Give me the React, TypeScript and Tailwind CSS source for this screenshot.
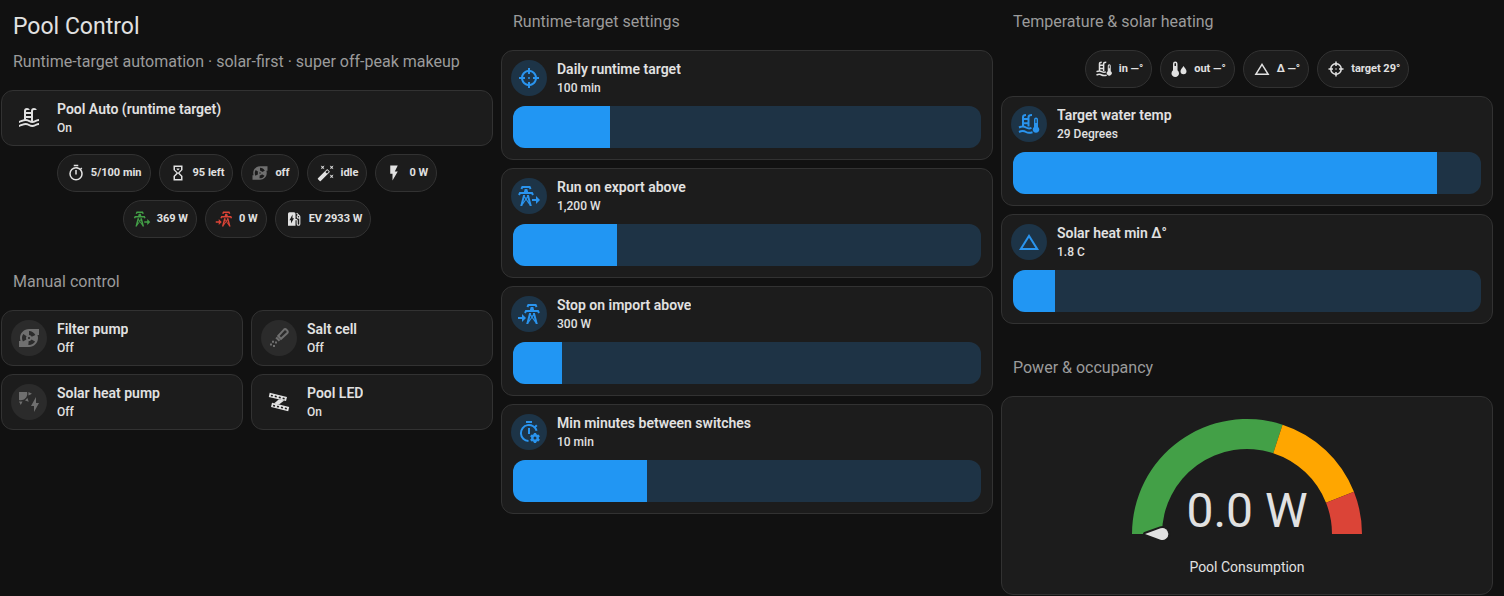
import { ReactNode, useState } from 'react'
import clsx from 'clsx'

type IconProps = { className?: string }

const POOL =
    'M2,15C3.67,14.25 5.33,13.5 7,13.25V5A3,3 0 0,1 10,2C11.31,2 12.42,2.83 12.83,4H10A1,1 0 0,0 9,5V6H14V5A3,3 0 0,1 17,2C18.31,2 19.42,2.83 19.83,4H17A1,1 0 0,0 16,5V14.94C18,14.62 20,13 22,13V15C19.78,15 17.56,17 15.33,17C13.11,17 10.89,15 8.67,15C6.44,15 4.22,16 2,17V15M14,8H9V10H14V8M14,12H9V13C10.67,13.16 12.33,14.31 14,14.79V12M2,19C4.22,18 6.44,17 8.67,17C10.89,17 13.11,19 15.33,19C17.56,19 19.78,17 22,17V19C19.78,19 17.56,21 15.33,21C13.11,21 10.89,19 8.67,19C6.44,19 4.22,20 2,21V19Z'
const TIMER =
    'M12,20A7,7 0 0,1 5,13A7,7 0 0,1 12,6A7,7 0 0,1 19,13A7,7 0 0,1 12,20M19.03,7.39L20.45,5.97C20,5.46 19.55,5 19.04,4.56L17.62,6C16.07,4.74 14.12,4 12,4A9,9 0 0,0 3,13A9,9 0 0,0 12,22C17,22 21,17.97 21,13C21,10.88 20.26,8.93 19.03,7.39M11,14H13V8H11M15,1H9V3H15V1Z'
const SAND =
    'M6,2H18V8L14,12L18,16V22H6V16L10,12L6,8V2M16,16.5L12,12.5L8,16.5V20H16V16.5M12,11.5L16,7.5V4H8V7.5L12,11.5M10,6H14V6.75L12,8.75L10,6.75V6Z'
const PUMP =
    'M2 21V15H3.5C3.18 14.06 3 13.05 3 12C3 7.03 7.03 3 12 3H22V9H20.5C20.82 9.94 21 10.95 21 12C21 16.97 16.97 21 12 21H2M5 12C5 13.28 5.34 14.47 5.94 15.5L9.4 13.5C9.15 13.06 9 12.55 9 12C9 11.35 9.21 10.75 9.56 10.26L6.3 7.93C5.48 9.08 5 10.5 5 12M12 19C14.59 19 16.86 17.59 18.06 15.5L14.6 13.5C14.08 14.4 13.11 15 12 15L11.71 15L11.33 18.97L12 19M12 9C13.21 9 14.26 9.72 14.73 10.76L18.37 9.1C17.27 6.68 14.83 5 12 5V9M12 11C11.45 11 11 11.45 11 12S11.45 13 12 13 13 12.55 13 12 12.55 11 12 11Z'
const WAND =
    'M7.5,5.6L5,7L6.4,4.5L5,2L7.5,3.4L10,2L8.6,4.5L10,7L7.5,5.6M19.5,15.4L22,14L20.6,16.5L22,19L19.5,17.6L17,19L18.4,16.5L17,14L19.5,15.4M22,2L20.6,4.5L22,7L19.5,5.6L17,7L18.4,4.5L17,2L19.5,3.4L22,2M13.34,12.78L15.78,10.34L13.66,8.22L11.22,10.66L13.34,12.78M14.37,7.29L16.71,9.63C17.1,10 17.1,10.65 16.71,11.04L5.04,22.71C4.65,23.1 4,23.1 3.63,22.71L1.29,20.37C0.9,20 0.9,19.35 1.29,18.96L12.96,7.29C13.35,6.9 14,6.9 14.37,7.29Z'
const FLASH = 'M7,2V13H10V22L17,10H13L17,2H7Z'
const EV =
    'M19.77,7.23L19.78,7.22L16.06,3.5L15,4.56L17.11,6.67C16.17,7.03 15.5,7.93 15.5,9A2.5,2.5 0 0,0 18,11.5C18.36,11.5 18.69,11.42 19,11.29V18.5A1,1 0 0,1 18,19.5A1,1 0 0,1 17,18.5V14A2,2 0 0,0 15,12H14V5A2,2 0 0,0 12,3H6A2,2 0 0,0 4,5V21H14V13.5H15.5V18.5A2.5,2.5 0 0,0 18,21A2.5,2.5 0 0,0 20.5,18.5V9C20.5,8.31 20.22,7.68 19.77,7.23M18,10A1,1 0 0,1 17,9A1,1 0 0,1 18,8A1,1 0 0,1 19,9A1,1 0 0,1 18,10M8,18V13.5H6L10,6V11H12L8,18Z'
const TARGET =
    'M11,2V4.07C7.38,4.53 4.53,7.38 4.07,11H2V13H4.07C4.53,16.62 7.38,19.47 11,19.93V22H13V19.93C16.62,19.47 19.47,16.62 19.93,13H22V11H19.93C19.47,7.38 16.62,4.53 13,4.07V2M11,6.08V8H13V6.09C15.5,6.5 17.5,8.5 17.92,11H16V13H17.91C17.5,15.5 15.5,17.5 13,17.92V16H11V17.91C8.5,17.5 6.5,15.5 6.08,13H8V11H6.09C6.5,8.5 8.5,6.5 11,6.08M12,11A1,1 0 0,0 11,12A1,1 0 0,0 12,13A1,1 0 0,0 13,12A1,1 0 0,0 12,11Z'
const SOLAR =
    'M11.45,2V5.55L15,3.77L11.45,2M10.45,8L8,10.46L11.75,11.71L10.45,8M2,11.45L3.77,15L5.55,11.45H2M10,2H2V10C2.57,10.17 3.17,10.25 3.77,10.25C7.35,10.26 10.26,7.35 10.27,3.75C10.26,3.16 10.17,2.57 10,2M17,22V16H14L19,7V13H22L17,22Z'
const DELTA = 'M12,7.77L18.39,18H5.61L12,7.77M12,4L2,20H22'
const TOWER =
    'M8.28,5.45L6.5,4.55L7.76,2H16.23L17.5,4.55L15.72,5.44L15,4H9L8.28,5.45M18.62,8H14.09L13.3,5H10.7L9.91,8H5.38L4.1,10.55L5.89,11.44L6.62,10H17.38L18.1,11.45L19.89,10.56L18.62,8M17.77,22H15.7L15.46,21.1L12,15.9L8.53,21.1L8.3,22H6.23L9.12,11H11.19L10.83,12.35L12,14.1L13.16,12.35L12.81,11H14.88L17.77,22M11.4,15L10.5,13.65L9.32,18.13L11.4,15M14.68,18.12L13.5,13.64L12.6,15L14.68,18.12Z'

const Svg = ({ className, children }: IconProps & { children: ReactNode }) => (
    <svg
        viewBox="0 0 24 24"
        fill="currentColor"
        aria-hidden="true"
        className={clsx('shrink-0', className)}
    >
        {children}
    </svg>
)

const fromPath = (d: string) => (props: IconProps) => (
    <Svg {...props}>
        <path d={d} />
    </Svg>
)

const PoolIcon = fromPath(POOL)
const TimerIcon = fromPath(TIMER)
const SandIcon = fromPath(SAND)
const PumpIcon = fromPath(PUMP)
const WandIcon = fromPath(WAND)
const FlashIcon = fromPath(FLASH)
const EvIcon = fromPath(EV)
const TargetIcon = fromPath(TARGET)
const SolarIcon = fromPath(SOLAR)
const DeltaIcon = fromPath(DELTA)

const ExportIcon = (props: IconProps) => (
    <Svg {...props}>
        <path d={TOWER} transform="translate(-3 0)" />
        <path d="M23,16L19,12V15H15V17H19V20L23,16Z" />
    </Svg>
)

const ImportIcon = (props: IconProps) => (
    <Svg {...props}>
        <path d={TOWER} transform="translate(3 0)" />
        <path d="M9,16L5,12V15H1V17H5V20L9,16Z" />
    </Svg>
)

const ShakerIcon = (props: IconProps) => (
    <Svg {...props}>
        <path
            d="M11.2,10L17,3.6C18.6,2.2 21.8,5.2 20.3,7L14,12.8Z"
            fill="none"
            stroke="currentColor"
            strokeWidth="2"
        />
        <path d="M8.4,12.2L9.9,10.7L13.3,14.1L11.8,15.6Z" />
        <path d="M5,14.7H7V16.7H5ZM8,15.5H10V17.5H8ZM3,17.5H5V19.5H3ZM6,19H8V21H6Z" />
    </Svg>
)

const LedStripIcon = (props: IconProps) => (
    <Svg {...props}>
        <path
            fillRule="evenodd"
            d="M2.7,2.8L20,6.9L19,11L1.8,6.9ZM4.1,4.7L3.7,6.2L5.6,6.6L6,5.1ZM8,5.6L7.6,7.1L9.5,7.6L9.9,6.1ZM12,6.6L11.6,8.1L13.5,8.5L13.9,7ZM15.9,7.5L15.5,9L17.4,9.5L17.8,8Z"
        />
        <path
            fillRule="evenodd"
            d="M5,12.8L22.2,17L21.2,21.2L4,17ZM6.3,14.7L5.9,16.2L7.8,16.7L8.2,15.2ZM10.2,15.7L9.8,17.2L11.7,17.6L12.1,16.1ZM14.2,16.6L13.8,18.1L15.7,18.6L16.1,17.1ZM18.1,17.6L17.7,19.1L19.6,19.5L20,18Z"
        />
        <path d="M12,9.3L17.2,10.4L12,14.6L7,13.4Z" />
    </Svg>
)

const TimerCogIcon = (props: IconProps) => (
    <Svg {...props}>
        <path d="M9,1H15V3H9ZM11,8H13V14H11Z" />
        <path
            d="M11.5,21A8,8 0 1,1 19.6,10.8M17.6,7.4L19.8,5.2"
            fill="none"
            stroke="currentColor"
            strokeWidth="2"
        />
        <circle
            cx="18"
            cy="18"
            r="2.7"
            fill="none"
            stroke="currentColor"
            strokeWidth="2.4"
        />
        <path
            d="M18,13V15.4M18,20.6V23M13.7,15.5L15.8,16.7M20.2,19.3L22.3,20.5M13.7,20.5L15.8,19.3M20.2,16.7L22.3,15.5"
            stroke="currentColor"
            strokeWidth="2.4"
        />
    </Svg>
)

const PoolThermometerIcon = (props: IconProps) => (
    <Svg {...props}>
        <path
            d="M6,14V5Q6,3 9,3M11.5,14.5V5Q11.5,3 15,3M6,7H11.5M6,11.3H11.5M2,15.5C4.5,14.3 6.5,14 9,15.5S13,16.5 14.5,15.9M2,20C4.5,18.8 6.5,18.5 9,20S13,21 15.5,20.2"
            fill="none"
            stroke="currentColor"
            strokeWidth="2"
        />
        <path
            fillRule="evenodd"
            d="M17,14.9V7.5A2,2 0 0,1 21,7.5V14.9A3.3,3.3 0 1,1 17,14.9ZM18.4,7.5V11H19.6V7.5A0.6,0.6 0 0,0 18.4,7.5Z"
        />
    </Svg>
)

const ThermometerWaterIcon = (props: IconProps) => (
    <Svg {...props}>
        <path
            fillRule="evenodd"
            d="M4,13.8V5A3,3 0 0,1 10,5V13.8A5,5 0 1,1 4,13.8ZM6,5V8H8V5A1,1 0 0,0 6,5Z"
        />
        <path d="M18,8C19.8,10.5 22,12.8 22,15A4,4 0 0,1 14,15C14,12.8 16.2,10.5 18,8Z" />
    </Svg>
)

type Icon = (props: IconProps) => ReactNode

const card = 'rounded-xl border border-[#323232] bg-[#1c1c1c]'

const Heading = ({ children, first }: { children: string; first?: boolean }) => (
    <h2
        className={clsx(
            'px-3 pt-0.5 text-base leading-10 text-[#9b9b9b]',
            !first && 'mt-[14px]'
        )}
    >
        {children}
    </h2>
)

const TileHeader = ({
    icon: IconEl,
    name,
    state,
    tone,
}: {
    icon: Icon
    name: string
    state: string
    tone: 'blue' | 'off' | 'plain'
}) => (
    <span className="flex items-center gap-2.5 p-[9px]">
        <span
            className={clsx(
                'flex size-9 shrink-0 items-center justify-center rounded-full',
                tone === 'blue' && 'bg-[#1d3447] text-[#2a94ee]',
                tone === 'off' && 'bg-[#2b2b2b] text-[#6f6f6f]',
                tone === 'plain' && 'text-[#e1e1e1]'
            )}
        >
            <IconEl className="size-6" />
        </span>
        <span className="flex min-w-0 flex-col text-left text-[#e1e1e1]">
            <span className="truncate text-[14px] leading-[18px] font-semibold">
                {name}
            </span>
            <span className="truncate pt-0.5 text-[12px] leading-4 font-medium">
                {state}
            </span>
        </span>
    </span>
)

const ToggleTile = ({
    icon,
    name,
    on: initial = false,
}: {
    icon: Icon
    name: string
    on?: boolean
}) => {
    const [on, setOn] = useState(initial)

    return (
        <button
            type="button"
            aria-pressed={on}
            className={card}
            onClick={() => setOn(!on)}
        >
            <TileHeader
                icon={icon}
                name={name}
                state={on ? 'On' : 'Off'}
                tone={on ? 'plain' : 'off'}
            />
        </button>
    )
}

const SliderTile = ({
    icon,
    name,
    unit,
    value: initial,
    min,
    max,
    step,
}: {
    icon: Icon
    name: string
    unit: string
    value: number
    min: number
    max: number
    step: number
}) => {
    const [value, setValue] = useState(initial)
    const percent = ((value - min) / (max - min)) * 100

    return (
        <div className={card}>
            <TileHeader
                icon={icon}
                name={name}
                state={`${value.toLocaleString('en-US')} ${unit}`}
                tone="blue"
            />
            <div className="px-[11px] pt-px pb-[11px]">
                <input
                    type="range"
                    aria-label={name}
                    min={min}
                    max={max}
                    step={step}
                    value={value}
                    onChange={(e) => setValue(Number(e.target.value))}
                    className="block h-[42px] w-full cursor-pointer appearance-none rounded-xl [&::-webkit-slider-thumb]:h-10 [&::-webkit-slider-thumb]:w-px [&::-webkit-slider-thumb]:appearance-none"
                    style={{
                        background: `linear-gradient(to right, #2196f3 ${percent}%, #1e3345 ${percent}%)`,
                    }}
                />
            </div>
        </div>
    )
}

const Chip = ({
    icon: IconEl,
    label,
    color = 'text-[#e1e1e1]',
}: {
    icon: Icon
    label: string
    color?: string
}) => (
    <button
        type="button"
        className="flex h-[38px] items-center gap-1.5 rounded-full border border-[#323232] bg-[#1c1c1c] pr-2 pl-[9px]"
    >
        <IconEl className={clsx('size-[18px]', color)} />
        <span className="text-[11px] leading-4 font-bold text-[#e1e1e1]">
            {label}
        </span>
    </button>
)

const Chips = ({ children }: { children: ReactNode }) => (
    <div className="flex flex-wrap justify-center gap-2 px-6">{children}</div>
)

// point on the dial, 0 is the left end and 1 the right end
const dialPoint = (fraction: number, radius: number) => {
    const angle = Math.PI * (1 - fraction)
    return `${115 + radius * Math.cos(angle)},${115 - radius * Math.sin(angle)}`
}

const SEGMENTS = [
    { from: 0, to: 0.6, color: '#43a047' },
    { from: 0.6, to: 0.88, color: '#ffa600' },
    { from: 0.88, to: 1, color: '#db4437' },
]

const Gauge = ({ value, label }: { value: string; label: string }) => (
    <div className={clsx(card, 'flex flex-col items-center pt-[22px] pb-[17px]')}>
        <div className="grid w-[230px] justify-items-center">
            <svg
                viewBox="0 0 230 122"
                className="col-start-1 row-start-1 w-full"
                aria-hidden="true"
            >
                {SEGMENTS.map((s) => (
                    <path
                        key={s.color}
                        d={`M${dialPoint(s.from, 115)}A115,115 0 0,1 ${dialPoint(s.to, 115)}L${dialPoint(s.to, 85)}A85,85 0 0,0 ${dialPoint(s.from, 85)}Z`}
                        fill={s.color}
                    />
                ))}
                <path
                    d="M13,115L28.5,109.3A6,6 0 1,1 28.5,120.7Z"
                    fill="#e1e1e1"
                    stroke="#1c1c1c"
                    strokeWidth="4"
                    strokeLinejoin="round"
                    paintOrder="stroke"
                />
            </svg>
            <span className="col-start-1 row-start-1 self-end pb-1 text-5xl leading-[52px] text-[#e1e1e1]">
                {value}
            </span>
        </div>
        <span className="mt-4 text-sm leading-5 text-[#e1e1e1]">{label}</span>
    </div>
)

const App = () => {
    return (
        <main className="grid min-h-screen grid-cols-3 items-start gap-2 bg-[#111111] pr-[11px] pl-px font-[Roboto,sans-serif]">
            <section className="flex flex-col gap-2">
                <header className="px-3 pt-[11px]">
                    <h1 className="text-[23px] leading-8 text-[#e1e1e1]">
                        Pool Control
                    </h1>
                    <p className="pb-px text-base leading-[38px] text-[#9b9b9b]">
                        Runtime-target automation · solar-first · super off-peak
                        makeup
                    </p>
                </header>
                <ToggleTile icon={PoolIcon} name="Pool Auto (runtime target)" on />
                <Chips>
                    <Chip icon={TimerIcon} label="5/100 min" />
                    <Chip icon={SandIcon} label="95 left" />
                    <Chip icon={PumpIcon} label="off" color="text-[#6f6f6f]" />
                    <Chip icon={WandIcon} label="idle" />
                    <Chip icon={FlashIcon} label="0 W" />
                    <Chip icon={ExportIcon} label="369 W" color="text-[#43a047]" />
                    <Chip icon={ImportIcon} label="0 W" color="text-[#db4437]" />
                    <Chip icon={EvIcon} label="EV 2933 W" />
                </Chips>
                <Heading>Manual control</Heading>
                <div className="grid grid-cols-2 gap-2">
                    <ToggleTile icon={PumpIcon} name="Filter pump" />
                    <ToggleTile icon={ShakerIcon} name="Salt cell" />
                    <ToggleTile icon={SolarIcon} name="Solar heat pump" />
                    <ToggleTile icon={LedStripIcon} name="Pool LED" on />
                </div>
            </section>

            <section className="flex flex-col gap-2">
                <Heading first>Runtime-target settings</Heading>
                <SliderTile
                    icon={TargetIcon}
                    name="Daily runtime target"
                    unit="min"
                    value={100}
                    min={0}
                    max={480}
                    step={5}
                />
                <SliderTile
                    icon={ExportIcon}
                    name="Run on export above"
                    unit="W"
                    value={1200}
                    min={200}
                    max={4700}
                    step={100}
                />
                <SliderTile
                    icon={ImportIcon}
                    name="Stop on import above"
                    unit="W"
                    value={300}
                    min={90}
                    max={2090}
                    step={10}
                />
                <SliderTile
                    icon={TimerCogIcon}
                    name="Min minutes between switches"
                    unit="min"
                    value={10}
                    min={2}
                    max={30}
                    step={1}
                />
            </section>

            <section className="flex flex-col gap-2">
                <Heading first>Temperature &amp; solar heating</Heading>
                <Chips>
                    <Chip icon={PoolThermometerIcon} label="in —°" />
                    <Chip icon={ThermometerWaterIcon} label="out —°" />
                    <Chip icon={DeltaIcon} label="Δ —°" />
                    <Chip icon={TargetIcon} label="target 29°" />
                </Chips>
                <SliderTile
                    icon={PoolThermometerIcon}
                    name="Target water temp"
                    unit="Degrees"
                    value={29}
                    min={0}
                    max={32}
                    step={1}
                />
                <SliderTile
                    icon={DeltaIcon}
                    name="Solar heat min Δ°"
                    unit="C"
                    value={1.8}
                    min={0}
                    max={20}
                    step={0.1}
                />
                <Heading>Power &amp; occupancy</Heading>
                <Gauge value="0.0 W" label="Pool Consumption" />
            </section>
        </main>
    )
}

export default App
